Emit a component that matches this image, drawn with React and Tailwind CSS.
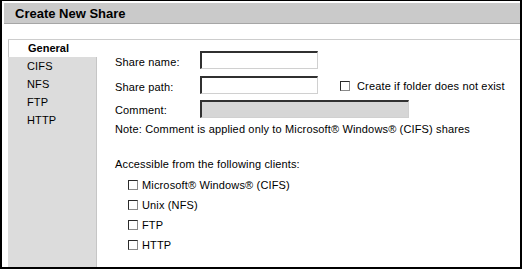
import React from "react";

function Box() {
  return (
    <span className="inline-block w-[10px] h-[10px] shrink-0 bg-white border-t border-l border-t-[#2a2a2a] border-l-[#2a2a2a] border-b border-r border-b-[#8a8a8a] border-r-[#8a8a8a]" />
  );
}

function Input({ w, disabled }) {
  return (
    <div
      className={`h-[18px] ${w} border-t-2 border-l-2 border-t-[#303030] border-l-[#303030] border-b border-r border-b-[#d0d0d0] border-r-[#d0d0d0] ${
        disabled ? "bg-[#d6d6d6]" : "bg-white"
      }`}
    />
  );
}

export default function App() {
  const clients = ["Microsoft® Windows® (CIFS)", "Unix (NFS)", "FTP", "HTTP"];
  return (
    <div
      className="w-[522px] h-[269px] bg-white border-t border-l-2 border-r-2 border-b-2 border-black flex flex-col text-[11px] tracking-[0.15px] text-black overflow-hidden"
      style={{ fontFamily: '"Liberation Sans", Arial, sans-serif' }}
    >
      <div className="mt-[2px] ml-[2px] h-[21px] bg-[#cacaca] border-b border-[#a6a6a6] pl-[11px] pt-[1px] text-[13px] font-bold leading-[19px] tracking-normal shrink-0">
        Create New Share
      </div>
      <div className="mt-[15px] ml-[6px] flex-1 flex border-t border-[#cdcdcd]">
        <div className="w-[89px] flex flex-col shrink-0">
          <div className="h-[17px] leading-[17px] pl-[19px] font-bold tracking-normal bg-white border-l border-[#c4c4c4]">
            General
          </div>
          <div className="flex-1 bg-[#dcdcdc] border-r border-[#c6c6c6] pl-[19px]">
            {["CIFS", "NFS", "FTP", "HTTP"].map((t) => (
              <div key={t} className="h-[18px] leading-[18px]">
                {t}
              </div>
            ))}
          </div>
        </div>
        <div className="flex-1 pl-[18px] pt-[11px] flex flex-col">
          <div className="flex items-start h-[18px]">
            <div className="w-[85px] h-[18px] leading-[18px] pt-[2px]">Share name:</div>
            <Input w="w-[118px]" />
          </div>
          <div className="flex items-start h-[18px] mt-[7px]">
            <div className="w-[85px] h-[18px] leading-[18px] pt-[2px]">Share path:</div>
            <Input w="w-[118px]" />
            <div className="flex items-center h-[18px] ml-[22px] gap-[7px] pt-[1px]">
              <Box />
              <span className="leading-[18px]">Create if folder does not exist</span>
            </div>
          </div>
          <div className="flex items-start h-[18px] mt-[6px]">
            <div className="w-[85px] h-[18px] leading-[18px] pt-[1px]">Comment:</div>
            <Input w="w-[209px]" disabled />
          </div>
          <div className="leading-[18px] mt-[2px]">
            Note: Comment is applied only to Microsoft® Windows® (CIFS) shares
          </div>
          <div className="leading-[18px] mt-[17px]">Accessible from the following clients:</div>
          <div className="mt-[2px] ml-[13px] flex flex-col">
            {clients.map((c) => (
              <div key={c} className="h-[20px] flex items-center gap-[4px]">
                <Box />
                <span className="leading-[20px]">{c}</span>
              </div>
            ))}
          </div>
        </div>
      </div>
    </div>
  );
}
